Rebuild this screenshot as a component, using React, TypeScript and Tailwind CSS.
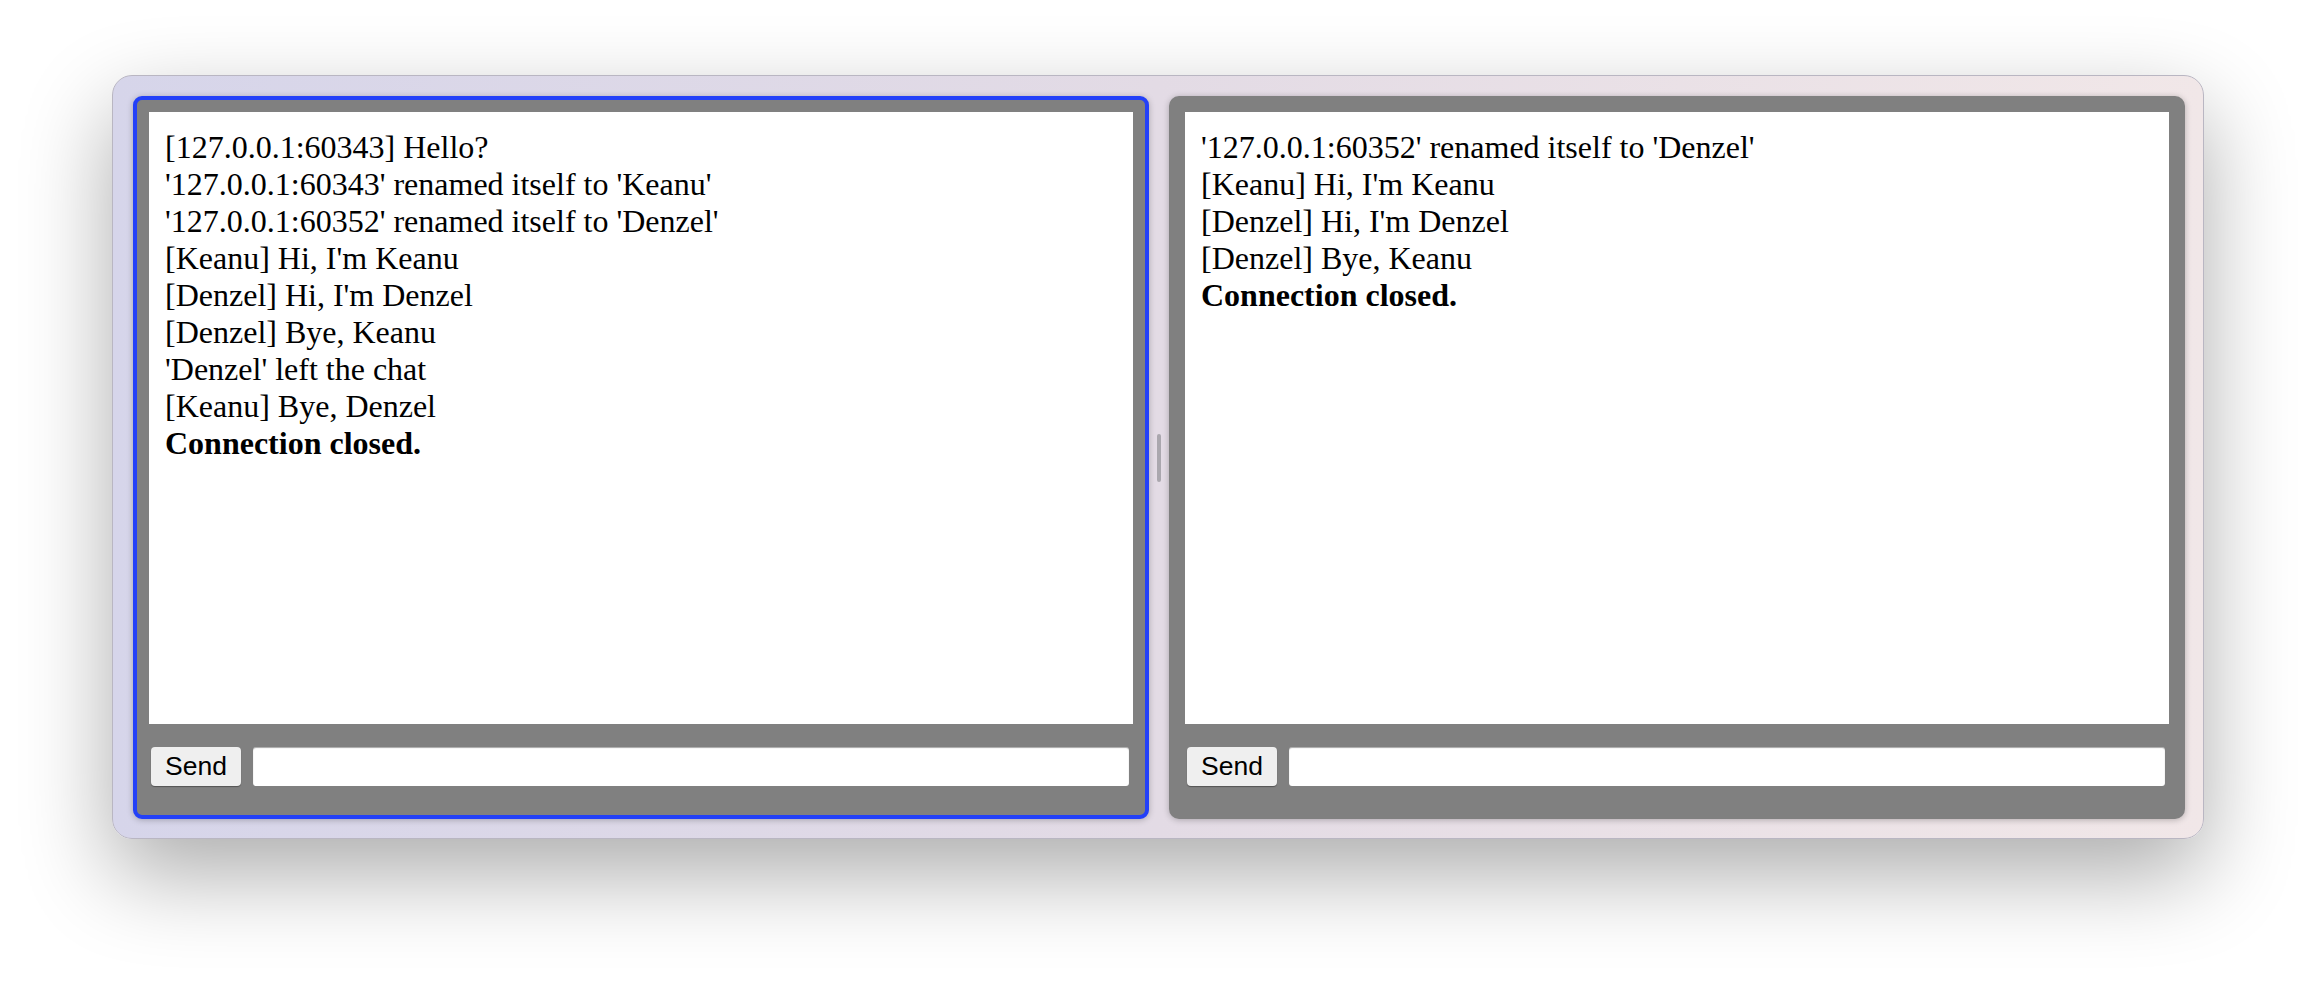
import React from "react";

type Line = { text: string; bold?: boolean };

const leftLog: Line[] = [
  { text: "[127.0.0.1:60343] Hello?" },
  { text: "'127.0.0.1:60343' renamed itself to 'Keanu'" },
  { text: "'127.0.0.1:60352' renamed itself to 'Denzel'" },
  { text: "[Keanu] Hi, I'm Keanu" },
  { text: "[Denzel] Hi, I'm Denzel" },
  { text: "[Denzel] Bye, Keanu" },
  { text: "'Denzel' left the chat" },
  { text: "[Keanu] Bye, Denzel" },
  { text: "Connection closed.", bold: true },
];

const rightLog: Line[] = [
  { text: "'127.0.0.1:60352' renamed itself to 'Denzel'" },
  { text: "[Keanu] Hi, I'm Keanu" },
  { text: "[Denzel] Hi, I'm Denzel" },
  { text: "[Denzel] Bye, Keanu" },
  { text: "Connection closed.", bold: true },
];

function ChatPane({ log, focused }: { log: Line[]; focused?: boolean }) {
  return (
    <div
      className={`w-[1016px] h-[723px] shrink-0 flex flex-col border-4 px-3 pt-3 bg-[#808080] shadow-[0_1px_6px_rgba(0,0,0,0.25)] ${
        focused ? "border-[#2340f8] rounded-[9px]" : "border-[#808080] rounded-[10px]"
      }`}
    >
      <div className="flex-1 min-h-0 bg-white pl-[16px] pt-[17px] font-['Liberation_Serif',serif] text-[32px] leading-[37px] text-black">
        {log.map((line, i) => (
          <div key={i} className={line.bold ? "font-bold" : ""}>
            {line.text}
          </div>
        ))}
      </div>
      <div className="h-[91px] shrink-0 flex items-start gap-[12px] pt-[23px] pl-[2px] pr-[4px]">
        <button
          type="button"
          className="h-[39px] w-[90px] shrink-0 rounded-[4px] bg-[#efefef] font-['Liberation_Sans',sans-serif] text-[26.5px] leading-[39px] text-black shadow-[0_1px_1px_rgba(0,0,0,0.35)]"
        >
          Send
        </button>
        <input
          type="text"
          className="h-[39px] min-w-0 flex-1 rounded-[3px] bg-white text-[26px] leading-[39px] shadow-[inset_0_1px_1px_rgba(0,0,0,0.35)] outline-none"
        />
      </div>
    </div>
  );
}

export default function App() {
  return (
    <div className="w-[2316px] h-[988px] bg-white pt-[75px] pl-[112px] overflow-hidden">
      <div className="w-[2092px] h-[764px] flex items-start p-[20px] rounded-[20px] border border-[#b9b6c2] bg-[linear-gradient(to_right,#d6d5ea,#e3dbe5,#f1e7e8)] shadow-[0_35px_90px_rgba(0,0,0,0.33)]">
        <ChatPane log={leftLog} focused />
        <div className="w-[20px] h-[723px] shrink-0 flex items-center justify-center">
          <div className="w-[4px] h-[48px] rounded-full bg-[#aaa7ae]" />
        </div>
        <ChatPane log={rightLog} />
      </div>
    </div>
  );
}
